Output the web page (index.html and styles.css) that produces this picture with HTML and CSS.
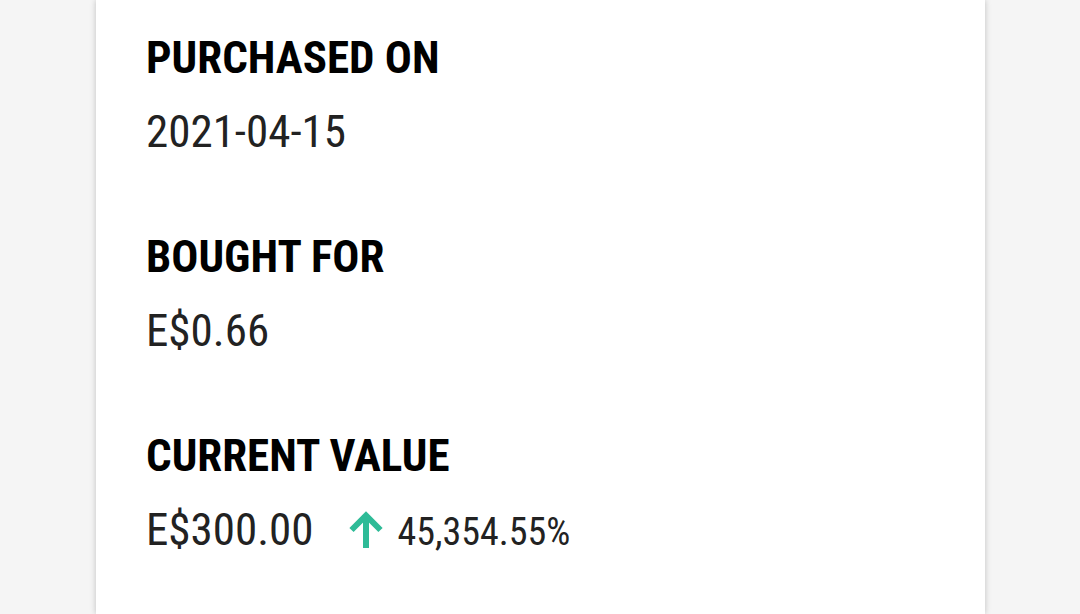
FILE: index.html
```html
<!DOCTYPE html>
<html>
<head>
<meta charset="utf-8">
<link rel="stylesheet" href="styles.css">
</head>
<body>
<main class="card">
  <section class="field">
    <h2 class="label">PURCHASED ON</h2>
    <p class="value">2021-04-15</p>
  </section>
  <section class="field">
    <h2 class="label">BOUGHT FOR</h2>
    <p class="value">E$0.66</p>
  </section>
  <section class="field">
    <h2 class="label">CURRENT VALUE</h2>
    <div class="value-row">
      <p class="value">E$300.00</p>
      <span class="change">
        <svg class="arrow" viewBox="0 0 36 37" width="36" height="37" aria-hidden="true"><path d="M18 37V4M3.5 19L18 4.5 32.5 19"/></svg>
        <span class="pct">45,354.55%</span>
      </span>
    </div>
  </section>
</main>
</body>
</html>
```
FILE: styles.css
```css
html, body {
  margin: 0;
  padding: 0;
  background: #f5f5f5;
  height: 100%;
  overflow: hidden;
}
body {
  font-family: "Roboto Condensed", Roboto, "Liberation Sans", sans-serif;
}
.card {
  margin-left: 96px;
  width: 889px;
  height: 100%;
  background: #fff;
  box-shadow: 0 0 6px rgba(0, 0, 0, 0.22);
  padding: 32px 50px 0;
  box-sizing: border-box;
}
.field {
  margin-bottom: 73px;
}
.label {
  margin: 0;
  font-size: 45px;
  line-height: 52px;
  font-weight: 700;
  color: #000;
}
.value {
  margin: 22px 0 0;
  font-size: 45px;
  line-height: 52px;
  font-weight: 400;
  color: #222;
}
.value-row {
  display: flex;
  align-items: flex-end;
}
.change {
  display: flex;
  align-items: flex-end;
  margin-left: 34px;
  margin-bottom: 2px;
}
.arrow {
  fill: none;
  stroke: #2ebb97;
  stroke-width: 6;
  stroke-linejoin: miter;
  margin-bottom: 6px;
}
.pct {
  margin-left: 14px;
  font-size: 38px;
  line-height: 44px;
  color: #222;
}
```
